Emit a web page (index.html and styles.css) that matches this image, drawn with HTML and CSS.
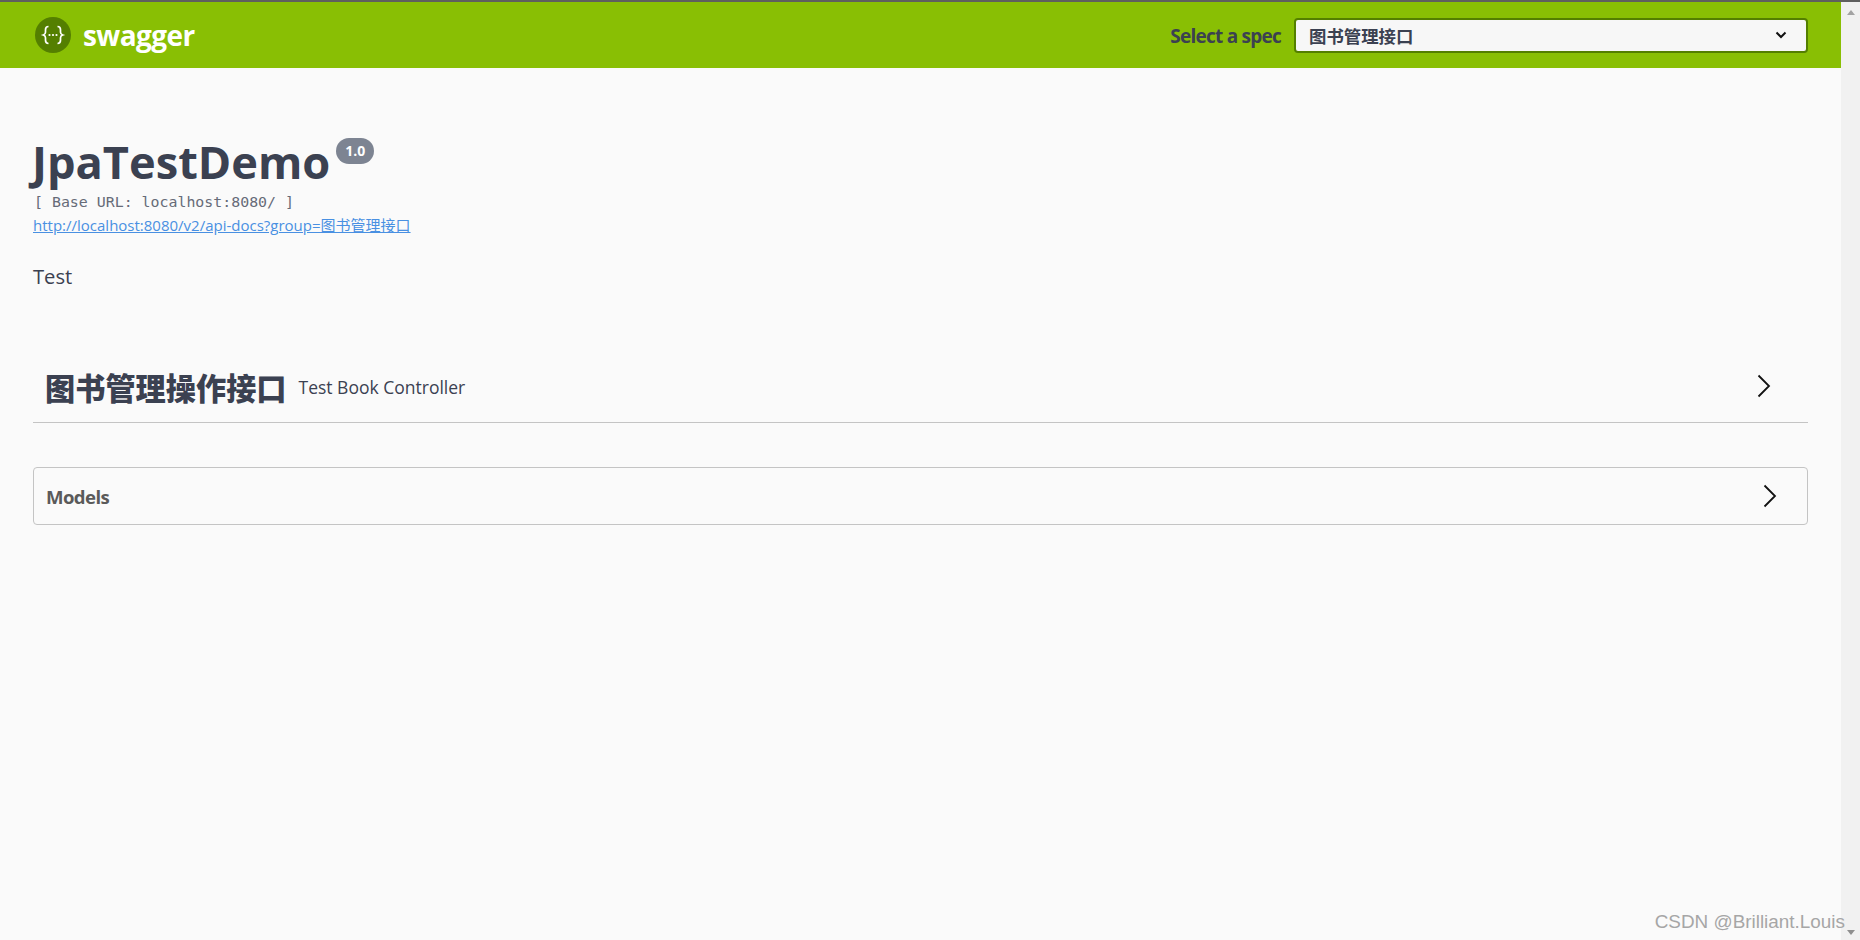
FILE: index.html
```html
<!DOCTYPE html>
<html lang="zh">
<head>
<meta charset="utf-8">
<title>Swagger UI</title>
<link rel="stylesheet" href="styles.css">
</head>
<body>
<div class="topline"></div>
<div class="shell">
  <main class="page">
    <header class="topbar">
      <a class="brand">
        <svg class="logo" viewBox="0 0 36 36" width="36" height="36" aria-hidden="true">
          <circle cx="18" cy="18" r="18" fill="#547f00"/>
          <path d="M13.5 9.5c-2.6 0-3 1.3-3 3.2v2.6c0 1.4-.8 2.2-2.2 2.7 1.4.5 2.2 1.3 2.2 2.7v2.6c0 1.9.4 3.2 3 3.2M22.500 9.500c2.600 0 3 1.300 3 3.200v2.600c0 1.400.8 2.200 2.200 2.700-1.400.5-2.200 1.300-2.200 2.700v2.600c0 1.900-.4 3.200-3 3.200" fill="none" stroke="#fff" stroke-width="1.700"/>
          <circle cx="14.500" cy="18" r="1.100" fill="#fff"/><circle cx="18" cy="18" r="1.100" fill="#fff"/><circle cx="21.500" cy="18" r="1.100" fill="#fff"/>
        </svg>
        <span class="brand-name">swagger</span>
      </a>
      <div class="spec">
        <span class="spec-label">Select a spec</span>
        <div class="spec-select">
          <span>图书管理接口</span>
          <svg viewBox="0 0 20 20" width="20" height="20" aria-hidden="true"><path d="M5.500 7.500 10 12l4.500-4.500" fill="none" stroke="#111" stroke-width="2"/></svg>
        </div>
      </div>
    </header>
    <section class="info">
      <h1 class="title">JpaTestDemo<span class="version">1.0</span></h1>
      <div class="base-url">[ Base URL: localhost:8080/ ]</div>
      <a class="spec-link">http://localhost:8080/v2/api-docs?group=图书管理接口</a>
      <p class="desc">Test</p>
    </section>
    <section class="tag">
      <h2 class="tag-name">图书管理操作接口</h2>
      <span class="tag-desc">Test Book Controller</span>
      <svg class="chev chev-tag" viewBox="0 0 14 24" width="14" height="24" aria-hidden="true"><path d="M1.500 1.500 12 12 1.500 22.500" fill="none" stroke="#111" stroke-width="1.800"/></svg>
    </section>
    <section class="models">
      <span class="models-name">Models</span>
      <svg class="chev" viewBox="0 0 14 24" width="14" height="24" aria-hidden="true"><path d="M1.500 1.500 12 12 1.500 22.500" fill="none" stroke="#111" stroke-width="1.800"/></svg>
    </section>
  </main>
  <aside class="scrollbar">
    <span class="arrow arrow-up"></span>
    <span class="arrow arrow-down"></span>
  </aside>
</div>
<div class="watermark">CSDN @Brilliant.Louis</div>
</body>
</html>
```

FILE: styles.css
```css
* { box-sizing: border-box; }
html, body { margin: 0; height: 100%; overflow: hidden; }
body { display: flex; flex-direction: column; background: #fafafa; color: #3b4151; font-family: "Open Sans", "Noto Sans CJK SC", sans-serif; }
.topline { height: 2px; background: #5f5f5f; flex: none; }
.shell { flex: 1; display: flex; min-height: 0; }
.page { flex: 1; min-width: 0; }
.scrollbar { width: 19px; flex: none; background: #f1f1f1; display: flex; flex-direction: column; justify-content: space-between; align-items: center; padding: 8px 0 5px; }
.arrow { width: 0; height: 0; border-left: 4.500px solid transparent; border-right: 4.500px solid transparent; }
.arrow-up { border-bottom: 5px solid #a3a3a3; }
.arrow-down { border-top: 5px solid #8f8f8f; }

.topbar { height: 66px; background: #89bf04; display: flex; align-items: center; justify-content: space-between; padding: 0 33px 0 35px; }
.brand { display: flex; align-items: center; gap: 12px; }
.logo { display: block; }
.brand-name { font-family: "Open Sans", sans-serif; font-weight: 700; font-size: 28px; color: #fff; letter-spacing: -0.6px; line-height: 1; }
.spec { display: flex; align-items: center; gap: 13px; }
.spec-label { font-family: "Open Sans", sans-serif; font-weight: 700; font-size: 19px; letter-spacing: -0.76px; color: #3b4151; padding-top: 2px; }
.spec-select { width: 514px; height: 35px; background: #f7f7f7; border: 2px solid #547f00; border-radius: 4px; display: flex; align-items: center; justify-content: space-between; padding: 0 15px 0 13px; font-weight: 700; font-size: 17.400px; font-family: "Noto Sans CJK SC", sans-serif; color: #3b4151; }

.info { margin: 0 33px; padding-top: 68px; }
.title { margin: 0 0 0 -1px; font-size: 45.200px; line-height: 52px; font-weight: 700; color: #3b4151; display: flex; align-items: flex-start; height: 52px; }
.version { background: #7d8492; color: #fff; font-size: 14px; line-height: 26px; height: 26px; width: 38px; text-align: center; border-radius: 13px; margin: 1.500px 0 0 6px; font-weight: 700; }
.base-url { font-family: "DejaVu Sans Mono", monospace; font-size: 14.900px; line-height: 18px; color: #666b78; margin: 5px 0 0 1px; }
.spec-link { display: block; font-size: 15px; line-height: 20px; color: #4990e2; text-decoration: underline; font-family: "Open Sans", "Noto Sans CJK SC", sans-serif; margin-top: 4px; }
.desc { margin: 28px 0 0; font-size: 20.200px; line-height: 26px; color: #3b4151; }

.tag { margin: 64px 33px 0; height: 70px; border-bottom: 1px solid #c4c4c4; display: flex; align-items: center; padding: 0 0 0 12px; }
.tag-name { margin: 0; font-family: "Noto Sans CJK SC", sans-serif; font-size: 30.200px; font-weight: 900; color: #3b4151; line-height: 1; }
.tag-desc { margin: 0 0 1px 12px; font-size: 17.500px; color: #3b4151; }
.chev { display: block; flex: none; }
.chev-tag { margin: 0 37px 4px auto; }

.models { margin: 44px 33px 0; height: 58px; border: 1px solid #c4c4c4; border-radius: 4px; display: flex; align-items: center; justify-content: space-between; padding: 0 30px 0 12px; }
.models-name { font-family: "Open Sans", sans-serif; font-weight: 700; font-size: 18.600px; letter-spacing: -0.6px; color: #5a5a5a; }

.watermark { position: absolute; right: 15px; bottom: 7px; font-family: "Liberation Sans", Arial, sans-serif; font-size: 18.900px; color: #a6a6a6; white-space: nowrap; }
```
